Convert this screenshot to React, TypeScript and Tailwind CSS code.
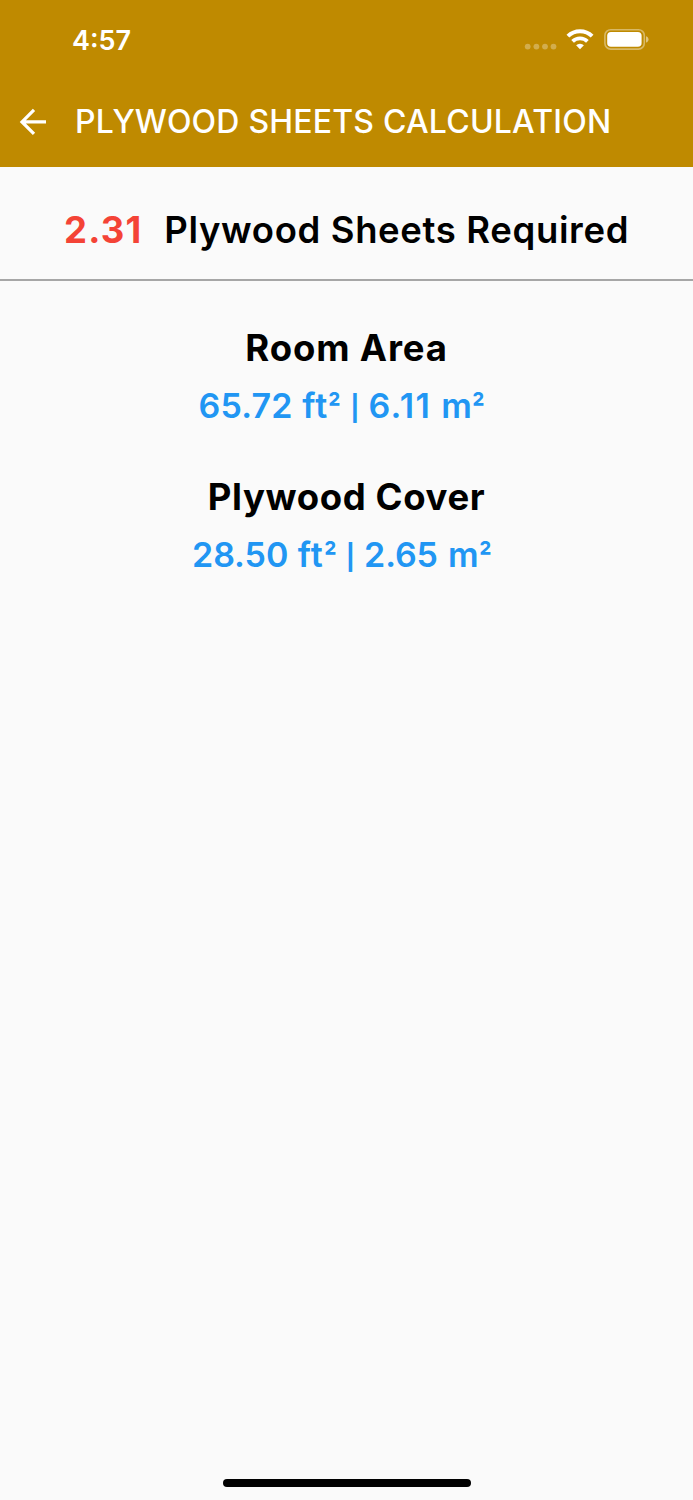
interface AreaResultProps {
  title: string;
  feet: string;
  meters: string;
  titleClass: string;
  feetClass: string;
  metersClass: string;
}

function StatusBar() {
  return (
    <div className="flex h-[78px] items-center pl-[72px] pr-[44px]">
      <span className="pt-[2px] text-[27px] leading-none font-semibold">4:57</span>
      <svg className="ml-auto mr-[9px]" width="34" height="28" viewBox="0 0 34 28" fill="#fff" fillOpacity={0.3}>
        <circle cx="4.7" cy="21.6" r="2.9" />
        <circle cx="13.4" cy="21.6" r="2.9" />
        <circle cx="22" cy="21.6" r="2.9" />
        <circle cx="30.5" cy="21.6" r="2.9" />
      </svg>
      <svg className="mr-[10px]" width="28" height="22" viewBox="0 0 28 22" fill="none" stroke="#fff" strokeWidth="4">
        <path d="M1.9 8.1a17.3 17.3 0 0 1 24.2 0" />
        <path d="M6.6 13.4a10.6 10.6 0 0 1 14.8 0" strokeWidth="3.8" />
        <path d="M14 21.3l-3.9-4a5.6 5.6 0 0 1 7.8 0z" fill="#fff" stroke="none" />
      </svg>
      <svg width="45" height="22" viewBox="0 0 45 22" fill="#fff">
        <rect x="0.9" y="1.7" width="39.4" height="19.4" rx="5.8" fill="none" stroke="#fff" strokeOpacity={0.4} strokeWidth="1.6" />
        <rect x="3.2" y="4" width="34.4" height="14.8" rx="3.8" />
        <path d="M42 8.2c3.4 1.2 3.4 5.2 0 6.4z" fillOpacity={0.5} />
      </svg>
    </div>
  );
}

function AppBar() {
  return (
    <div className="flex h-[87px] items-center pl-[19px]">
      <button aria-label="Back">
        <svg width="28" height="28" viewBox="0 0 28 28" fill="none" stroke="#fff" strokeWidth="3.2">
          <path d="M27 13.9H3M15 1.9L3 13.9l12 12" />
        </svg>
      </button>
      <h1 className="ml-[28px] whitespace-nowrap text-[32px] leading-none font-medium tracking-[0.2px]">
        PLYWOOD SHEETS CALCULATION
      </h1>
    </div>
  );
}

function Squared() {
  return <span className="inline-block w-[13px] origin-left scale-x-85 pt-[2px] text-[33px]">²</span>;
}

function AreaResult({ title, feet, meters, titleClass, feetClass, metersClass }: AreaResultProps) {
  return (
    <section className="flex flex-col items-center whitespace-nowrap">
      <h2 className={`text-[36.5px] leading-[46px] font-bold ${titleClass}`}>{title}</h2>
      <p className="mt-[12px] flex h-[46px] pr-[9px] text-[34px] leading-[46px] font-semibold text-[#2196f3]">
        <span className={feetClass}>{feet}</span>
        <span className="ml-[9.5px] tracking-[1px]">ft</span>
        <Squared />
        <span className="mx-[9px] text-[25px] leading-[50px] font-bold">|</span>
        <span className={metersClass}>{meters}</span>
        <span className="ml-[10px] mr-[0.5px]">m</span>
        <Squared />
      </p>
    </section>
  );
}

export default function App() {
  return (
    <div className="flex h-[1500px] w-[693px] flex-col bg-[#fafafa] font-['Inter',sans-serif] text-black">
      <header className="h-[167px] bg-[#bf8a00] text-white">
        <StatusBar />
        <AppBar />
      </header>

      <div className="flex h-[114px] items-center border-b-2 border-[#a6a6a6] pl-[64px] pt-[14px] whitespace-nowrap text-[36.5px] leading-none">
        <span className="font-bold tracking-[1.2px] text-[#f44336]">2.31</span>
        <span className="ml-[21.8px] font-semibold tracking-[0.64px]">Plywood Sheets Required</span>
      </div>

      <main className="flex grow flex-col gap-[45px] pt-[44px]">
        <AreaResult
          title="Room Area"
          feet="65.72"
          meters="6.11"
          titleClass="tracking-[0.85px]"
          feetClass="tracking-[0.2px]"
          metersClass="tracking-[1.4px]"
        />
        <AreaResult
          title="Plywood Cover"
          feet="28.50"
          meters="2.65"
          titleClass="tracking-[0.62px]"
          feetClass="tracking-[-0.05px]"
          metersClass="tracking-[-0.1px]"
        />
      </main>

      {/* Home indicator */}
      <div className="mx-auto mb-[13px] h-[8.5px] w-[248px] shrink-0 rounded-full bg-black" />
    </div>
  );
}
